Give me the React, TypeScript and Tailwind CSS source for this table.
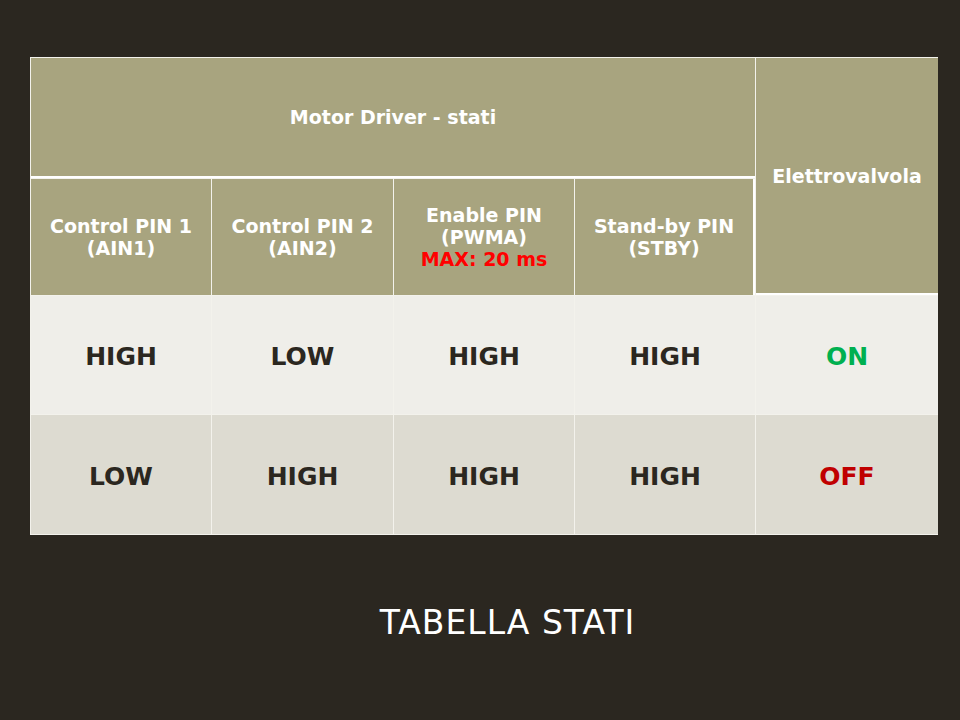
const head = "bg-[#a8a47f] text-white font-bold text-[19px] leading-[22px] flex flex-col items-center justify-center text-center";
const cell = "flex items-center justify-center pt-[4px] font-bold text-[25px]";

const rows = [
  { bg: "bg-[#efeee9]", vals: ["HIGH", "LOW", "HIGH", "HIGH"], out: "ON", outColor: "text-[#00b050]" },
  { bg: "bg-[#dddbd1]", vals: ["LOW", "HIGH", "HIGH", "HIGH"], out: "OFF", outColor: "text-[#c00000]" },
];

export default function App() {
  return (
    <div
      className="w-[960px] h-[720px] bg-[#2b2720] pt-[57px] pl-[30px]"
      style={{ fontFamily: '"DejaVu Sans", Verdana, sans-serif' }}
    >
      <div className="grid w-[908px] grid-cols-[180px_181px_180px_180px_182px] grid-rows-[120px_116px_118px_119px] gap-px bg-[#f3f2ec] p-px">
        <div className={`${head} col-span-4 border-b-2 border-white`}>Motor Driver - stati</div>
        <div className={`${head} row-span-2 border-b-2 border-white`}>Elettrovalvola</div>
        <div className={head}>
          <span>Control PIN 1</span>
          <span>(AIN1)</span>
        </div>
        <div className={head}>
          <span>Control PIN 2</span>
          <span>(AIN2)</span>
        </div>
        <div className={head}>
          <span>Enable PIN</span>
          <span>(PWMA)</span>
          <span className="text-[#ff0000]">MAX: 20 ms</span>
        </div>
        <div className={`${head} border-r-2 border-white`}>
          <span>Stand-by PIN</span>
          <span>(STBY)</span>
        </div>
        {rows.map((r, i) => (
          <div key={i} className="contents">
            {r.vals.map((v, j) => (
              <div key={j} className={`${cell} ${r.bg} text-[#2b2720]`}>{v}</div>
            ))}
            <div className={`${cell} ${r.bg} ${r.outColor}`}>{r.out}</div>
          </div>
        ))}
      </div>
      <div className="mt-[63px] pl-[25px] text-center text-white text-[33px] tracking-[1px]">TABELLA STATI</div>
    </div>
  );
}
